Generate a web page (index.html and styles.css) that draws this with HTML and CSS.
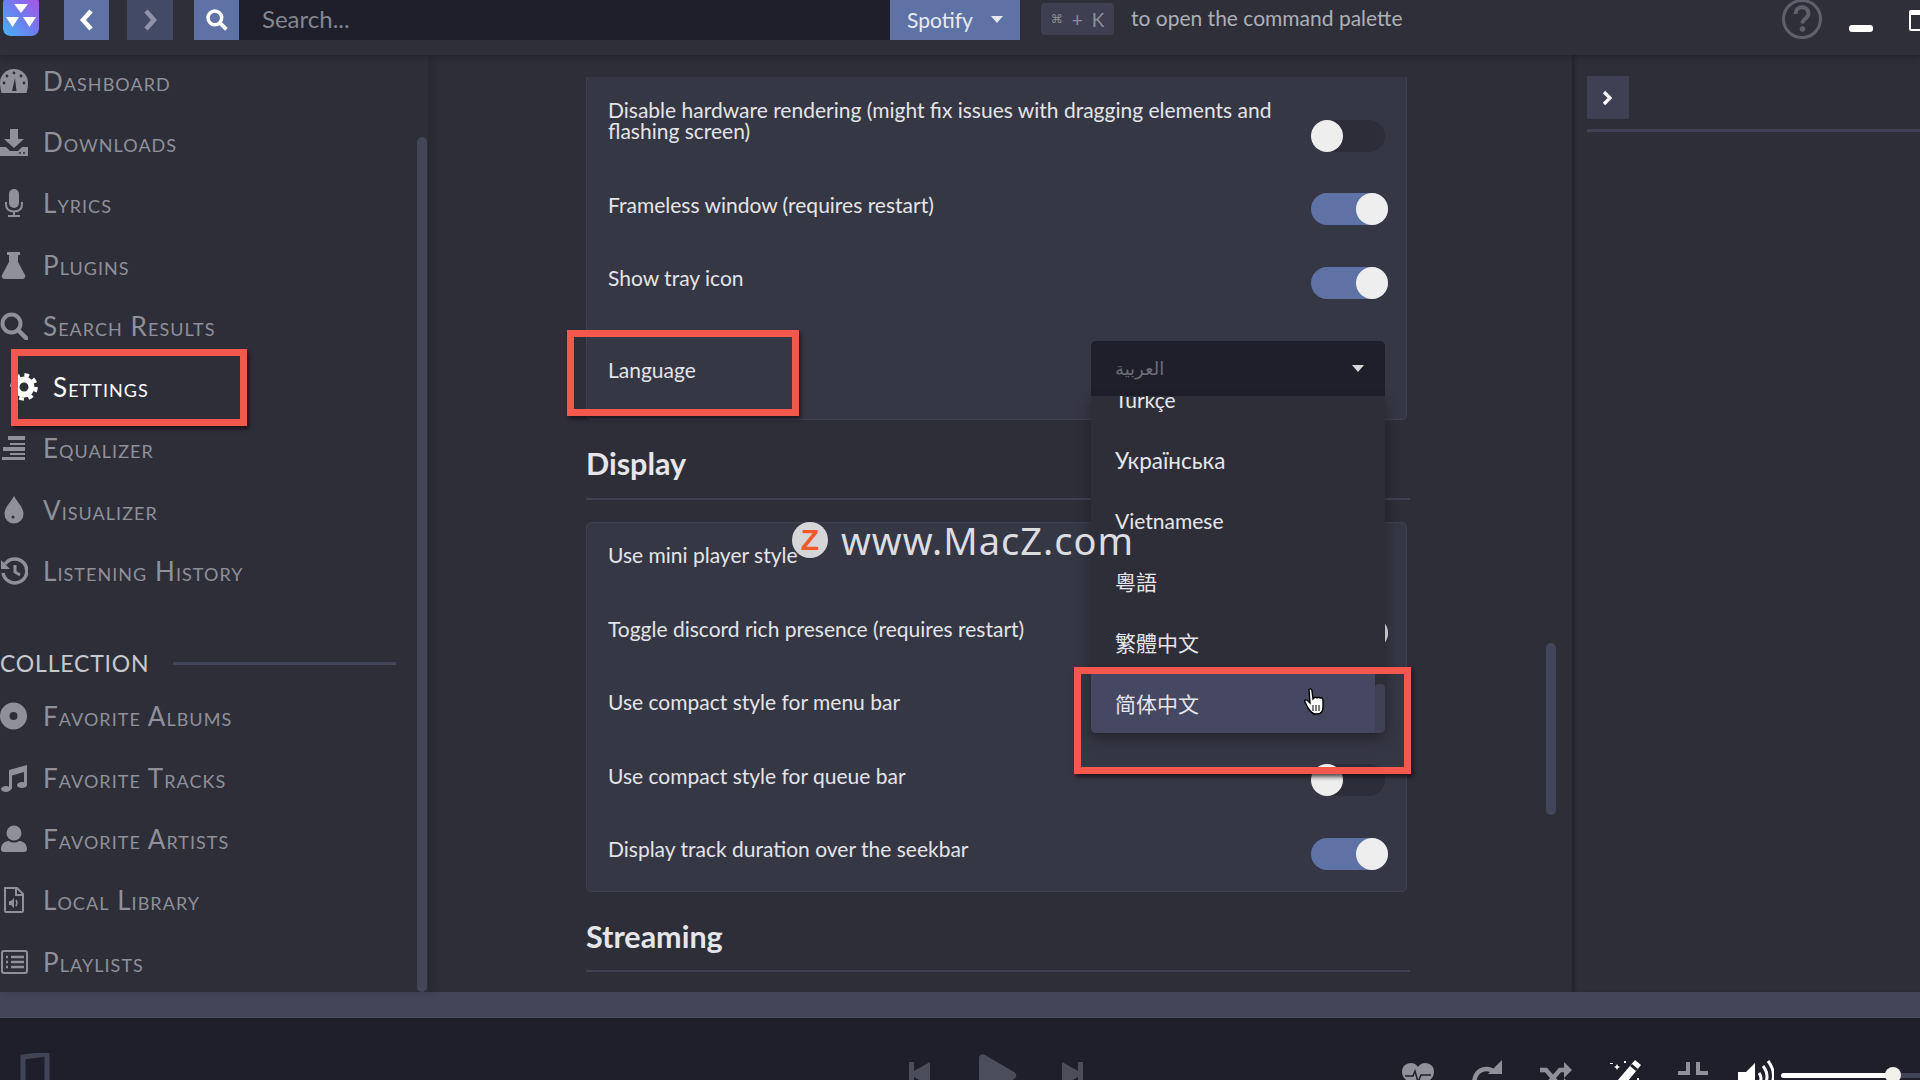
FILE: index.html
```html
<!DOCTYPE html>
<html lang="en">
<head>
<meta charset="utf-8">
<title>Sonixd settings</title>
<link rel="stylesheet" href="styles.css">
</head>
<body>
<div class="app">
  <header class="topbar">
    <div class="logo">
      <svg viewBox="0 0 36 40" width="36" height="40"><defs><linearGradient id="lg" x1="0" y1="1" x2="1" y2="0"><stop offset="0" stop-color="#45b4f2"/><stop offset=".5" stop-color="#6f7cf0"/><stop offset="1" stop-color="#b04fe6"/></linearGradient></defs><rect width="36" height="40" rx="7" fill="url(#lg)"/><path d="M11 8h14l-7 9zM3 21h13l-6.500 10zM20 21h13l-6.500 10z" fill="#fff"/></svg>
    </div>
    <button class="btn btn-back"><svg viewBox="0 0 20 24" width="20" height="24"><path d="M14 3 6 12l8 9" fill="none" stroke="#fff" stroke-width="4.500"/></svg></button>
    <button class="btn btn-forward"><svg viewBox="0 0 20 24" width="20" height="24"><path d="m6 3 8 9-8 9" fill="none" stroke="#8f94a6" stroke-width="4.500"/></svg></button>
    <button class="btn btn-search"><svg viewBox="0 0 28 28" width="24" height="24"><circle cx="11.500" cy="11.500" r="8" fill="none" stroke="#fff" stroke-width="4"/><path d="m17 17 8 8" stroke="#fff" stroke-width="4.500"/></svg></button>
    <div class="search-input">Search...</div>
    <button class="btn btn-spotify">Spotify<span class="caret"></span></button>
    <kbd class="kbd"><span class="kbd-cmd">⌘</span> + K</kbd>
    <span class="hint">to open the command palette</span>
    <div class="window-tools">
      <svg class="help" viewBox="0 0 42 42" width="42" height="42"><circle cx="21" cy="21" r="18.500" fill="none" stroke="#5f606b" stroke-width="3"/><path d="M14.500 16c0-9 13-9 13 -.5 0 5-6 5-6 10" fill="none" stroke="#5f606b" stroke-width="4"/><circle cx="21.500" cy="31" r="2.800" fill="#5f606b"/></svg>
      <span class="win-min"></span>
      <span class="win-max"></span>
    </div>
  </header>

  <div class="main">
    <nav class="sidebar">
      <ul class="nav-list">
        <li class="nav-item"><svg class="nav-icon" viewBox="0 0 28 28"><path d="M14 2A14 14 0 0 0 0 16c0 3 .6 6 1.500 10h25c.9-4 1.500-7 1.500-10A14 14 0 0 0 14 2z" fill="currentColor"/><path d="m12 24 3-13 1.500 13z" fill="#2e2e3a"/><circle cx="7" cy="9" r="1.400" fill="#2e2e3a"/><circle cx="21" cy="9" r="1.400" fill="#2e2e3a"/><circle cx="14" cy="6" r="1.400" fill="#2e2e3a"/><circle cx="4" cy="16" r="1.400" fill="#2e2e3a"/><circle cx="24" cy="16" r="1.400" fill="#2e2e3a"/></svg>Dashboard</li>
        <li class="nav-item"><svg class="nav-icon" viewBox="0 0 28 28"><path d="M10 1h8v10h6L14 20 4 11h6z" fill="currentColor"/><path d="M0 19h6l4 4h8l4-4h6v9H0z" fill="currentColor"/><circle cx="20" cy="25" r="1" fill="#2e2e3a"/><circle cx="24" cy="25" r="1" fill="#2e2e3a"/></svg>Downloads</li>
        <li class="nav-item"><svg class="nav-icon" viewBox="0 0 28 28"><rect x="9" y="0" width="10" height="19" rx="5" fill="currentColor"/><path d="M6 13v2c0 5 3 7.500 8 7.500s8-2.500 8-7.500v-2" fill="none" stroke="currentColor" stroke-width="2"/><path d="M14 22v4M8 27h12" stroke="currentColor" stroke-width="2"/></svg>Lyrics</li>
        <li class="nav-item"><svg class="nav-icon" viewBox="0 0 28 28"><path d="M7 1h13v3h-2v7l7 13c.8 2-.2 4-2.500 4H4.500C2.200 28 1.200 26 2 24l7-13V4H7z" fill="currentColor"/></svg>Plugins</li>
        <li class="nav-item"><svg class="nav-icon" viewBox="0 0 28 28"><circle cx="11.500" cy="11.500" r="9" fill="none" stroke="currentColor" stroke-width="4"/><path d="m18 18 8.500 8.500" stroke="currentColor" stroke-width="4.500" stroke-linecap="round"/></svg>Search Results</li>
        <li class="nav-item nav-active"><svg class="nav-icon" viewBox="0 0 28 28"><circle cx="14" cy="14" r="7.500" fill="none" stroke="currentColor" stroke-width="6"/><circle cx="14" cy="14" r="12" fill="none" stroke="currentColor" stroke-width="3.500" stroke-dasharray="4.800 4.620"/></svg>Settings</li>
        <li class="nav-item"><svg class="nav-icon" viewBox="0 0 28 28"><path d="M8 2h17v4H8zM10 9h15v2H10zM3 13h22v4H3zM10 19h15v2H10zM2 23h23v3H2z" fill="currentColor"/></svg>Equalizer</li>
        <li class="nav-item"><svg class="nav-icon" viewBox="0 0 28 28"><path d="M14 0c3 6 9.500 11 9.500 18a9.500 9.500 0 0 1-19 0C4.500 11 11 6 14 0z" fill="currentColor"/><circle cx="13" cy="21" r="1.500" fill="#2e2e3a"/></svg>Visualizer</li>
        <li class="nav-item"><svg class="nav-icon" viewBox="0 0 28 28"><path d="M5 7a12 12 0 1 1-2 9" fill="none" stroke="currentColor" stroke-width="3.500"/><path d="M1 3v9h9z" fill="currentColor"/><path d="M15 8v7l5 3" fill="none" stroke="currentColor" stroke-width="3"/></svg>Listening History</li>
      </ul>
      <div class="group-head"><span>COLLECTION</span><i class="group-line"></i></div>
      <ul class="nav-list-plain">
        <li class="nav-item"><svg class="nav-icon" viewBox="0 0 28 28"><circle cx="13.500" cy="14" r="13.500" fill="currentColor"/><circle cx="13.500" cy="14" r="4" fill="#2e2e3a"/></svg>Favorite Albums</li>
        <li class="nav-item"><svg class="nav-icon" viewBox="0 0 28 28"><path d="M9 6 27 1v20h-3V8L12 11.500V25H9z" fill="currentColor"/><ellipse cx="6" cy="25" rx="5" ry="3" fill="currentColor"/><ellipse cx="22" cy="21" rx="5" ry="3" fill="currentColor"/></svg>Favorite Tracks</li>
        <li class="nav-item"><svg class="nav-icon" viewBox="0 0 28 28"><circle cx="14" cy="8" r="7.500" fill="currentColor"/><path d="M1 24c0-6 5-8 8-8 3 2 7 2 10 0 3 0 8 2 8 8 0 2-1 3-3 3H4c-2 0-3-1-3-3z" fill="currentColor"/></svg>Favorite Artists</li>
        <li class="nav-item"><svg class="nav-icon" viewBox="0 0 28 28"><path d="M5 2h12l6 6v17q0 1-1 1H6q-1 0-1-1z" fill="none" stroke="currentColor" stroke-width="2"/><path d="M16 2v7h7" fill="none" stroke="currentColor" stroke-width="2"/><path d="M9 15h2l3-3v10l-3-3H9z" fill="currentColor"/><path d="M16 14q2 3 0 6" fill="none" stroke="currentColor" stroke-width="1.500"/></svg>Local Library</li>
        <li class="nav-item"><svg class="nav-icon" viewBox="0 0 28 28"><rect x="2" y="3" width="25" height="22" rx="2" fill="none" stroke="currentColor" stroke-width="2"/><path d="M11 9h13M11 14h13M11 19h13" stroke="currentColor" stroke-width="2.500"/><path d="M6 9h2M6 14h2M6 19h2" stroke="currentColor" stroke-width="2.500"/></svg>Playlists</li>
      </ul>
      <i class="side-thumb"></i>
    </nav>

    <main class="content">
      <section class="card card-first">
        <div class="row"><span class="label label-two">Disable hardware rendering (might fix issues with dragging elements and flashing screen)</span><span class="toggle"></span></div>
        <div class="row"><span class="label">Frameless window (requires restart)</span><span class="toggle toggle-on"></span></div>
        <div class="row"><span class="label">Show tray icon</span><span class="toggle toggle-on"></span></div>
        <div class="row row-lang">
          <span class="label">Language</span>
          <div class="select">
            <span class="select-value">العربية</span><span class="caret caret-select"></span>
            <div class="menu">
              <ul class="menu-list">
                <li class="opt">Türkçe</li>
                <li class="opt opt-uk">Українська</li>
                <li class="opt">Vietnamese</li>
                <li class="opt opt-tc">粵語</li>
                <li class="opt opt-tc">繁體中文</li>
                <li class="opt opt-sc opt-hover">简体中文<i class="menu-thumb"></i></li>
              </ul>
            </div>
          </div>
        </div>
      </section>
      <h2 class="section-title">Display</h2>
      <section class="card">
        <div class="row"><span class="label">Use mini player style</span><span class="toggle"></span></div>
        <div class="row"><span class="label">Toggle discord rich presence (requires restart)</span><span class="toggle toggle-on"></span></div>
        <div class="row"><span class="label">Use compact style for menu bar</span><span class="toggle"></span></div>
        <div class="row"><span class="label">Use compact style for queue bar</span><span class="toggle"></span></div>
        <div class="row"><span class="label">Display track duration over the seekbar</span><span class="toggle toggle-on"></span></div>
      </section>
      <h2 class="section-title section-title-last">Streaming</h2>
      <i class="content-thumb"></i>
    </main>

    <aside class="panel">
      <button class="panel-btn"><svg viewBox="0 0 14 16" width="14" height="16"><path d="m3 2 6 6-6 6" fill="none" stroke="#fff" stroke-width="3.200"/></svg></button>
      <div class="panel-rule"></div>
    </aside>
  </div>

  <div class="seekbar"></div>
  <footer class="player">
    <svg class="art" viewBox="0 0 30 40" width="30" height="40"><path d="M3 40V4L27 1v39" fill="none" stroke="#414357" stroke-width="5"/></svg>
    <div class="transport">
      <svg class="t-prev" viewBox="0 0 21 24" width="21" height="24"><path d="M0 0h5v9L21 0v24L5 15v9H0z" fill="#4c4d5a"/></svg>
      <svg class="t-play" viewBox="0 0 38 40" width="38" height="40"><path d="M0 4c0-3 3-5 6-3l29 17c3 2 3 5 0 7L6 40H0z" fill="#4c4d5a"/></svg>
      <svg class="t-next" viewBox="0 0 21 24" width="21" height="24"><path d="M21 0h-5v9L0 0v24l16-9v9h5z" fill="#4c4d5a"/></svg>
    </div>
    <div class="controls">
      <svg class="ctl ctl-heart" viewBox="0 0 32 30" width="32" height="30"><path d="M16 30 3 17C-1 13-1 6 3 3c4-3 10-3 13 2 3-5 9-5 13-2 4 3 4 10 0 14z" fill="#8f9099"/><path d="M3 14h8l2-5 3 11 3-7h10" fill="none" stroke="#1e1f2b" stroke-width="1.500"/></svg>
      <svg class="ctl ctl-repeat" viewBox="0 0 32 30" width="32" height="30"><path d="M24 8A12 12 0 1 0 16 30" fill="none" stroke="#8f9099" stroke-width="4.500" transform="translate(-2 3)"/><path d="M31 0v14H17z" fill="#8f9099"/></svg>
      <svg class="ctl ctl-shuffle" viewBox="0 0 32 30" width="32" height="30"><path d="M0 8h6l14 16h6M0 24h6l14-16h6" fill="none" stroke="#8f9099" stroke-width="4.500"/><path d="M24 0l8 8-8 8zM24 16l8 8-8 8z" fill="#8f9099"/></svg>
      <svg class="ctl ctl-wand" viewBox="0 0 32 30" width="32" height="30"><path d="M26 0l6 5L10 32l-7-5z" fill="#fff"/><path d="M23 4l6 5-2 2-6-5z" fill="#1e1f2b"/><path d="m8 4 1 2 2 1-2 1-1 2-1-2-2-1 2-1zM1 3h3v1H1zM15 1h2v2h-2zM28 18h2v2h-2z" fill="#fff"/></svg>
      <svg class="ctl ctl-compress" viewBox="0 0 30 30" width="30" height="30"><path d="M10 0v11H0M20 0v11h10" fill="none" stroke="#8f9099" stroke-width="4"/></svg>
      <svg class="ctl-vol" viewBox="0 0 36 30" width="36" height="30"><path d="M0 12h8l9-9v27H0z" fill="#fff"/><path d="M21 13q4 5 0 11M25 6q8 10 0 22M30 1q11 14 0 30" fill="none" stroke="#fff" stroke-width="3"/></svg>
      <div class="vol-slider"><i class="vol-fill"></i><i class="vol-knob"></i></div>
    </div>
  </footer>

  <div class="mark mark-settings"></div>
  <div class="mark mark-language"></div>
  <div class="mark mark-option"></div>

  <div class="watermark">
    <span class="wm-logo">Z</span><span class="wm-text">www.MacZ.com</span>
  </div>
  <svg class="pointer" viewBox="0 0 22 28" width="22" height="28"><path d="M5 2c1-2 3-1 3 1l1 8 1-1c1-1 2-1 3 0 1-1 2-1 3 0 1-.5 3 0 3 2v7c0 4-2 7-6 7h-2c-3 0-5-3-7-6L1 14c-1-2 1-3 3-1l2 2z" fill="#fff" stroke="#000" stroke-width="1.400"/><path d="M9 17v6M12 17v6M15 17v6" stroke="#000" stroke-width="1"/></svg>
</div>
</body>
</html>
```

FILE: styles.css
```css
* { box-sizing: border-box; }
html, body { margin: 0; height: 100%; background: #2e2e39; overflow: hidden; }
body { font-family: Lato, "Noto Sans", sans-serif; color: #e4e4e8; }
ul { list-style: none; margin: 0; padding: 0; }
button { border: 0; padding: 0; font: inherit; color: inherit; }

.app { position: relative; display: flex; flex-direction: column; width: 1920px; height: 1080px; overflow: hidden; }

/* top bar */
.topbar { position: relative; z-index: 2; flex: 0 0 55px; display: flex; align-items: flex-start; background: #2f2f3a; box-shadow: 0 2px 6px rgba(20, 20, 30, .35); }
.logo { width: 36px; height: 36px; margin-left: 3px; overflow: hidden; border-radius: 0 0 7px 7px; }
.logo svg { display: block; margin-top: -4px; }
.btn { display: flex; align-items: center; justify-content: center; height: 40px; }
.btn-back { width: 45px; margin-left: 25px; background: #5f72a6; }
.btn-forward { width: 46px; margin-left: 18px; background: #424a66; }
.btn-search { width: 45px; margin-left: 21px; background: #5f72a6; }
.search-input { width: 651px; height: 40px; padding-left: 23px; background: #1e1f2b; color: #85868f; font-size: 24px; line-height: 38px; }
.btn-spotify { width: 130px; padding-bottom: 2px; background: #5f72a6; color: #e8eaf2; font-size: 21px; }
.caret { display: inline-block; width: 0; height: 0; margin-left: 18px; border: 6px solid transparent; border-top: 7px solid #e8e8ec; border-bottom: 0; }
.kbd { display: flex; align-items: center; justify-content: center; gap: 9px; width: 73px; height: 32px; margin: 3px 0 0 21px; border-radius: 4px; background: #3e3f50; color: #8f9099; font-family: Lato, "DejaVu Sans", sans-serif; font-size: 19px; word-spacing: 4px; }
.kbd-cmd { font-family: "DejaVu Sans", sans-serif; font-size: 12px; }
.hint { margin-left: 17px; color: #aeafb5; font-size: 21px; line-height: 36px; }
.window-tools { display: flex; align-items: flex-start; margin-left: auto; }
.help { margin: -2px 26px 0 0; display: block; }
.win-min { width: 24px; height: 7px; margin-top: 25px; border-radius: 3px; background: #fff; }
.win-max { width: 22px; height: 21px; margin: 10px -11px 0 36px; border: 2px solid #fff; border-top-width: 5px; border-radius: 2px; }

.main { flex: 1; display: flex; min-height: 0; }

/* sidebar */
.sidebar { position: relative; flex: 0 0 428px; overflow: hidden; background: #2e2e39; color: #8f9099; box-shadow: 5px 0 8px rgba(20, 20, 30, .2); z-index: 1; }
.nav-list { margin-top: -5px; }
.nav-item { display: flex; align-items: center; gap: 15px; height: 61.3px; font-size: 26px; letter-spacing: 1.050px; font-variant: small-caps; line-height: 1; }
.nav-icon { flex: 0 0 28px; width: 28px; height: 28px; }
.nav-active { padding-left: 10px; color: #fff; }
.group-head { display: flex; align-items: center; gap: 24px; width: 396px; height: 84px; padding-top: 46px; padding-bottom: 7px; color: #c8c9cf; font-size: 23px; letter-spacing: .800px; }
.group-line { flex: 1; height: 3px; background: #434558; }
.side-thumb { position: absolute; top: 82px; bottom: 0; left: 417px; width: 10px; border-radius: 5px; background: #434558; }

/* settings content */
.content { position: relative; flex: 1; padding: 22px 0 0 158px; background: #2e2e39; overflow: hidden; }
.card { width: 821px; padding: 0 18.500px 0 21px; border: 1px solid #3f4054; border-radius: 5px; background: #363744; height: 370px; }
.card-first { height: 343px; padding-top: 22px; border-top: 0; border-radius: 0 0 5px 5px; }
.row { display: flex; align-items: center; justify-content: space-between; height: 73.500px; font-size: 21px; }
.label { max-width: 680px; margin-bottom: 10px; line-height: 21px; color: #e4e4e8; }
.label-two { margin-bottom: 32px; }
.toggle { position: relative; flex: 0 0 74px; height: 32px; margin-right: 3px; border-radius: 16px; background: #2c2d39; }
.toggle::after { content: ""; position: absolute; top: 0; left: 0; width: 32px; height: 32px; border-radius: 50%; background: #eeeeee; }
.toggle-on { flex-basis: 77px; margin-right: 0; background: #5f72a6; }
.toggle-on::after { left: 45px; }
.row-lang { height: 100px; align-items: flex-start; padding-top: 21px; position: relative; }
.row-lang .label { margin-top: 18px; }

.select { position: relative; z-index: 3; width: 294px; height: 55px; margin-right: 2.500px; padding: 0 21px 0 24px; display: flex; align-items: center; justify-content: space-between; border-radius: 5px 5px 0 0; background: #1e1f2b; }
.select-value { color: #6b6c76; font-family: "DejaVu Sans", sans-serif; font-size: 18px; }
.caret-select { margin-left: 0; border-top-color: #d8d8dc; }
.menu { position: absolute; top: 55px; left: 0; width: 294px; height: 337px; overflow: hidden; border-radius: 0 0 5px 5px; background: #2e2e39; box-shadow: 0 6px 14px rgba(15, 15, 22, .45); }
.menu-list { margin-top: -26px; }
.opt { position: relative; display: flex; align-items: center; height: 60.500px; padding-left: 24px; font-size: 21px; color: #e6e6ea; }
.opt-uk { font-size: 22.500px; }
.opt-tc { font-family: Lato, "Noto Sans CJK TC", sans-serif; }
.opt-sc { font-family: Lato, "Noto Sans CJK SC", sans-serif; }
.opt-hover { height: 61.500px; background: #454860; }
.menu-thumb { position: absolute; top: 0; right: 0; bottom: 0; width: 10px; background: #2e2e39; }
.menu-thumb::before { content: ""; position: absolute; top: 12px; right: 0; bottom: 0; left: 0; border-radius: 4px 4px 0 0; background: #3f4155; }

.section-title { margin: 0; width: 824px; height: 80px; padding-top: 22px; border-bottom: 2px solid #3f4054; color: #e6e6ea; font-size: 30.500px; line-height: 42px; font-weight: 700; }
.card + .section-title { margin-bottom: 22px; }
.section-title-last { padding-top: 23px; }
.content-thumb { position: absolute; top: 588px; left: 1118px; width: 10px; height: 172px; border-radius: 5px; background: #434558; }

/* right panel */
.panel { flex: 0 0 348px; padding: 21px 0 0 15px; background: #2e2e39; box-shadow: inset 4px 0 3px -1px rgba(30, 30, 40, .55); }
.panel-btn { display: flex; align-items: center; justify-content: center; width: 42px; height: 43px; background: #3f4054; }
.panel-rule { height: 3px; margin-top: 10px; background: #3f4054; }

/* bottom */
.seekbar { flex: 0 0 26px; background: #434558; border-bottom: 1px solid #4a4c5e; }
.player { position: relative; flex: 0 0 62px; display: flex; overflow: hidden; background: #1e1f2b; }
.art { flex: none; margin: 35px 0 0 20px; }
.transport { display: flex; align-items: flex-start; margin-left: 859px; }
.t-prev { margin-top: 44px; }
.t-play { margin: 36px 0 0 49px; }
.t-next { margin: 44px 0 0 45px; }
.controls { display: flex; align-items: flex-start; gap: 37px; margin-left: 319px; }
.ctl { flex: none; margin-top: 44px; }
.ctl-repeat, .ctl-wand { margin-top: 42px; }
.ctl-vol { flex: none; margin: 42px 0 0 -7px; }
.vol-slider { position: relative; flex: none; width: 140px; height: 5px; margin: 55px 0 0 -30px; background: #424459; border-radius: 3px; }
.vol-fill { position: absolute; top: 0; left: 0; width: 112px; height: 5px; border-radius: 3px; background: #fff; }
.vol-knob { position: absolute; top: -6px; left: 104px; width: 16px; height: 16px; border-radius: 50%; background: #f1f1ea; }

/* annotation overlays */
.mark { position: absolute; z-index: 5; border: 7px solid #f4574b; box-shadow: 2px 3px 4px rgba(20, 10, 15, .7); }
.mark-settings { left: 11px; top: 349px; width: 236px; height: 77px; }
.mark-language { left: 567px; top: 330px; width: 232px; height: 86px; }
.mark-option { left: 1074px; top: 667px; width: 337px; height: 107px; }

.watermark { position: absolute; z-index: 6; left: 792px; top: 522px; display: flex; align-items: center; gap: 13px; height: 36px; }
.wm-logo { width: 36px; height: 36px; border-radius: 50%; background: #d6d6d8; color: #f1592a; font-family: "Liberation Sans", sans-serif; font-size: 30px; font-weight: 700; line-height: 36px; text-align: center; }
.wm-text { color: #dcdde1; font-family: "Noto Sans", sans-serif; font-size: 38px; letter-spacing: 1px; line-height: 36px; }
.pointer { position: absolute; z-index: 6; left: 1304px; top: 688px; }
```
